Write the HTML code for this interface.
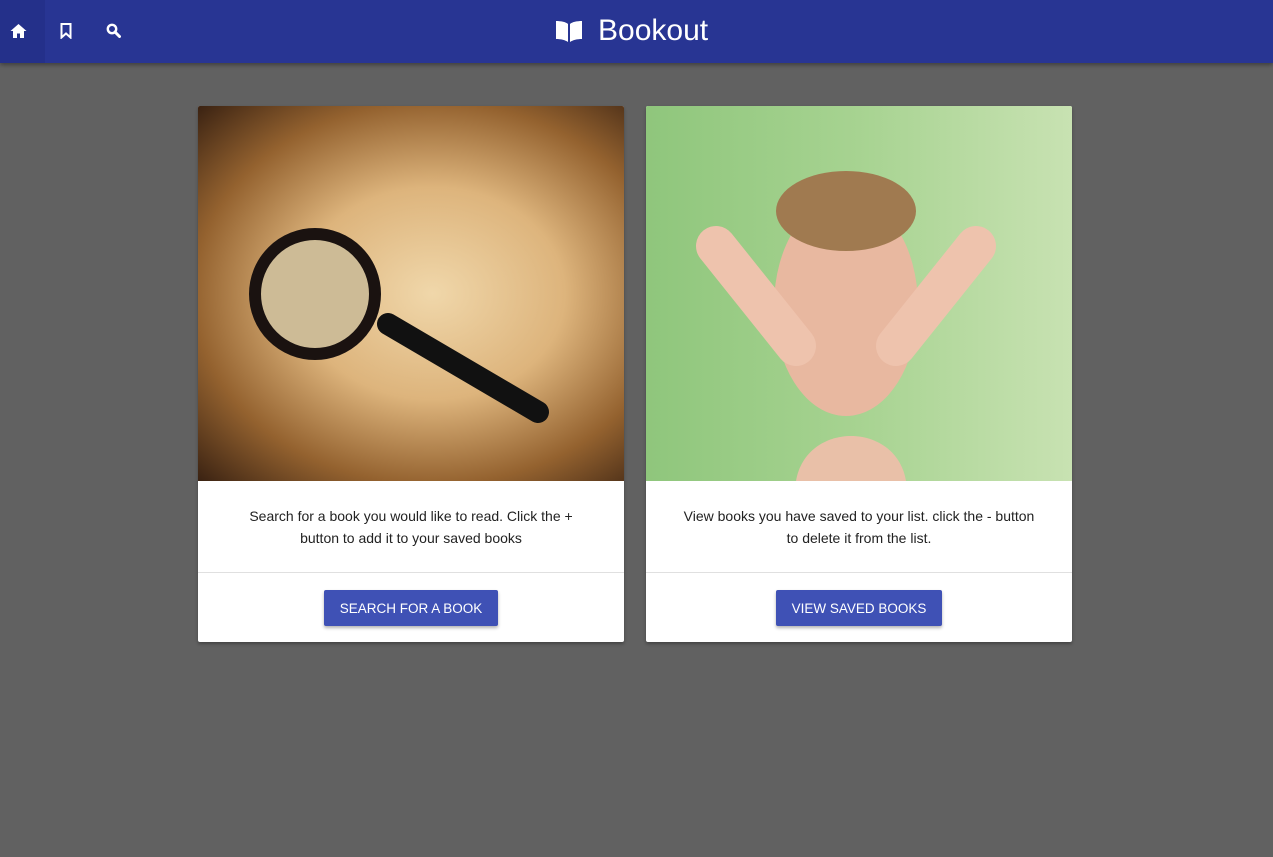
<!DOCTYPE html>
<html><head><meta charset="utf-8"><style>
*{box-sizing:border-box;margin:0;padding:0}
body{width:1273px;height:857px;background:#616161;font-family:"Liberation Sans",sans-serif;overflow:hidden;position:relative}
.nav{position:absolute;left:0;top:0;width:1273px;height:63px;background:#283593;box-shadow:0 2px 4px rgba(0,0,0,.35)}
.act{position:absolute;left:0;top:0;width:45px;height:63px;background:#24308a}
.ic{position:absolute;top:23px}
.title{position:absolute;left:598px;top:14px;color:#fff;font-size:30px}
.card{position:absolute;top:106px;width:426px;height:536px;background:#fff;border-radius:2px;box-shadow:0 2px 3px rgba(0,0,0,.3);overflow:hidden}
.img{height:375px}
.txt{height:92px;border-bottom:1px solid #e0e0e0;display:flex;align-items:center;justify-content:center;text-align:center;font-size:14px;line-height:22px;color:#222;padding:0 34px}
.btn{position:absolute;top:484px;height:36px;background:#3f51b5;color:#fff;font-size:13.5px;display:flex;align-items:center;justify-content:center;border-radius:2px;box-shadow:0 2px 3px rgba(0,0,0,.3)}
</style></head><body>
<div class="nav"><div class="act"></div>
<svg class="ic" style="left:10px" width="17" height="16" viewBox="0 0 17 16"><path d="M8.5 1L0.5 8h2.5v7h4v-4.5h3V15h4V8h2.5z" fill="#fff"/></svg>
<svg class="ic" style="left:60px" width="12" height="16" viewBox="0 0 12 16"><path d="M1.5 1h9v13.5L6 10.5l-4.5 4z" fill="none" stroke="#fff" stroke-width="2"/></svg>
<svg class="ic" style="left:106px" width="15" height="15" viewBox="0 0 15 15"><circle cx="6" cy="6" r="4.2" fill="none" stroke="#fff" stroke-width="2.4"/><path d="M9 9l4.5 4.5" stroke="#fff" stroke-width="3" stroke-linecap="round"/></svg>
<svg style="position:absolute;left:555px;top:20px" width="28" height="22" viewBox="0 0 28 22"><path d="M1 1c5 0 10 1 12 3v18c-3-2-7-3-12-3z M27 1c-5 0-10 1-12 3v18c3-2 7-3 12-3z" fill="#fff"/></svg>
<div class="title">Bookout</div></div>

<div class="card" style="left:198px">
<div class="img" style="background:radial-gradient(ellipse at 55% 50%,#f0d7aa 0%,#ddb47c 40%,#94622f 72%,#3a2212 100%)">
<svg width="426" height="375"><circle cx="117" cy="188" r="60" fill="#cdbb96" stroke="#1a1210" stroke-width="12"/><path d="M190 218l150 88" stroke="#111" stroke-width="22" stroke-linecap="round"/></svg>
</div>
<div class="txt">Search for a book you would like to read. Click the + button to add it to your saved books</div>
<div class="btn" style="left:126px;width:174px">SEARCH FOR A BOOK</div>
</div>

<div class="card" style="left:646px">
<div class="img" style="background:linear-gradient(90deg,#8fc67c,#a7d391 50%,#c8e2b2)">
<svg width="426" height="375"><ellipse cx="200" cy="200" rx="72" ry="110" fill="#e8b8a0"/><path d="M70 140l80 100M330 140l-80 100" stroke="#eec3ad" stroke-width="40" stroke-linecap="round"/><path d="M150 375c10-60 100-60 110 0z" fill="#e9c0a8"/><ellipse cx="200" cy="105" rx="70" ry="40" fill="#a07a50"/></svg>
</div>
<div class="txt">View books you have saved to your list. click the - button to delete it from the list.</div>
<div class="btn" style="left:130px;width:166px">VIEW SAVED BOOKS</div>
</div>
</body></html>
